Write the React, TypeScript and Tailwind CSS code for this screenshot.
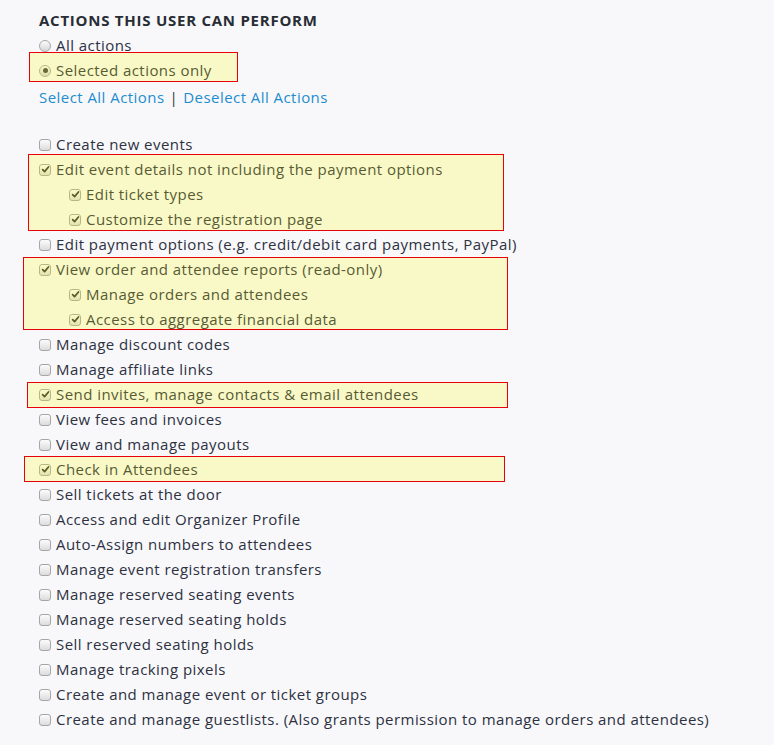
import * as React from 'react';

type Item = {
    label: string;
    checked?: boolean;
    nested?: boolean;
};

const items: Item[] = [
    { label: 'Create new events' },
    { label: 'Edit event details not including the payment options', checked: true },
    { label: 'Edit ticket types', checked: true, nested: true },
    { label: 'Customize the registration page', checked: true, nested: true },
    { label: 'Edit payment options (e.g. credit/debit card payments, PayPal)' },
    { label: 'View order and attendee reports (read-only)', checked: true },
    { label: 'Manage orders and attendees', checked: true, nested: true },
    { label: 'Access to aggregate financial data', checked: true, nested: true },
    { label: 'Manage discount codes' },
    { label: 'Manage affiliate links' },
    { label: 'Send invites, manage contacts & email attendees', checked: true },
    { label: 'View fees and invoices' },
    { label: 'View and manage payouts' },
    { label: 'Check in Attendees', checked: true },
    { label: 'Sell tickets at the door' },
    { label: 'Access and edit Organizer Profile' },
    { label: 'Auto-Assign numbers to attendees' },
    { label: 'Manage event registration transfers' },
    { label: 'Manage reserved seating events' },
    { label: 'Manage reserved seating holds' },
    { label: 'Sell reserved seating holds' },
    { label: 'Manage tracking pixels' },
    { label: 'Create and manage event or ticket groups' },
    { label: 'Create and manage guestlists. (Also grants permission to manage orders and attendees)' },
];

// highlight boxes drawn over the list (left, top, width, height)
const highlights = [
    'left-[29px] top-[52px] w-[209px] h-[30px]',
    'left-[28px] top-[154px] w-[476px] h-[77px]',
    'left-[23px] top-[257px] w-[485px] h-[73px]',
    'left-[27px] top-[382px] w-[481px] h-[26px]',
    'left-[24px] top-[456px] w-[481px] h-[26px]',
];

function Checkbox({ checked }: { checked?: boolean }) {
    return (
        <span className="flex h-[12px] w-[12px] shrink-0 items-center justify-center rounded-[3px] border border-[#a6a6a6] bg-gradient-to-b from-[#fcfcfc] to-[#dcdcdc]">
            {checked && (
                <svg viewBox="0 0 10 10" className="h-[9px] w-[9px]">
                    <path d="M1.8 5.2 L4 7.4 L8.3 2.2" fill="none" stroke="#333" strokeWidth="1.9" strokeLinecap="round" strokeLinejoin="round" />
                </svg>
            )}
        </span>
    );
}

function Radio({ checked }: { checked?: boolean }) {
    return (
        <span className="flex h-[12px] w-[12px] shrink-0 items-center justify-center rounded-full border border-[#a6a6a6] bg-gradient-to-b from-[#fcfcfc] to-[#d6d6d6]">
            {checked && <span className="h-[5px] w-[5px] rounded-full bg-[#444]" />}
        </span>
    );
}

export default function App() {
    return (
        <div className="relative min-h-screen bg-[#f8f8fa] pl-[39px] pt-[8px] font-['Open_Sans',sans-serif] text-[15px] tracking-[0.45px] text-[#2d3142]">
            <h2 className="h-[25px] text-[15px] font-bold uppercase leading-[25px] tracking-[0.75px] text-[#282c35]">
                Actions this user can perform
            </h2>

            <label className="flex h-[25px] items-center gap-[5px]">
                <Radio />
                <span>All actions</span>
            </label>
            <label className="flex h-[25px] items-center gap-[5px]">
                <Radio checked />
                <span>Selected actions only</span>
            </label>

            <div className="mt-[2px] flex h-[25px] items-center gap-[5px] text-[#1d8dd0]">
                <a href="#">Select All Actions</a>
                <span className="text-[#2d3142]">|</span>
                <a href="#">Deselect All Actions</a>
            </div>

            <ul className="mt-[22px]">
                {items.map((item) => (
                    <li
                        key={item.label}
                        className={`flex h-[25px] items-center gap-[5px] whitespace-nowrap ${item.nested ? 'pl-[30px]' : ''}`}
                    >
                        <Checkbox checked={item.checked} />
                        <span>{item.label}</span>
                    </li>
                ))}
            </ul>

            {highlights.map((pos) => (
                <div
                    key={pos}
                    className={`pointer-events-none absolute border border-[#e8000b] bg-[#ffff00]/20 ${pos}`}
                />
            ))}
        </div>
    );
}
